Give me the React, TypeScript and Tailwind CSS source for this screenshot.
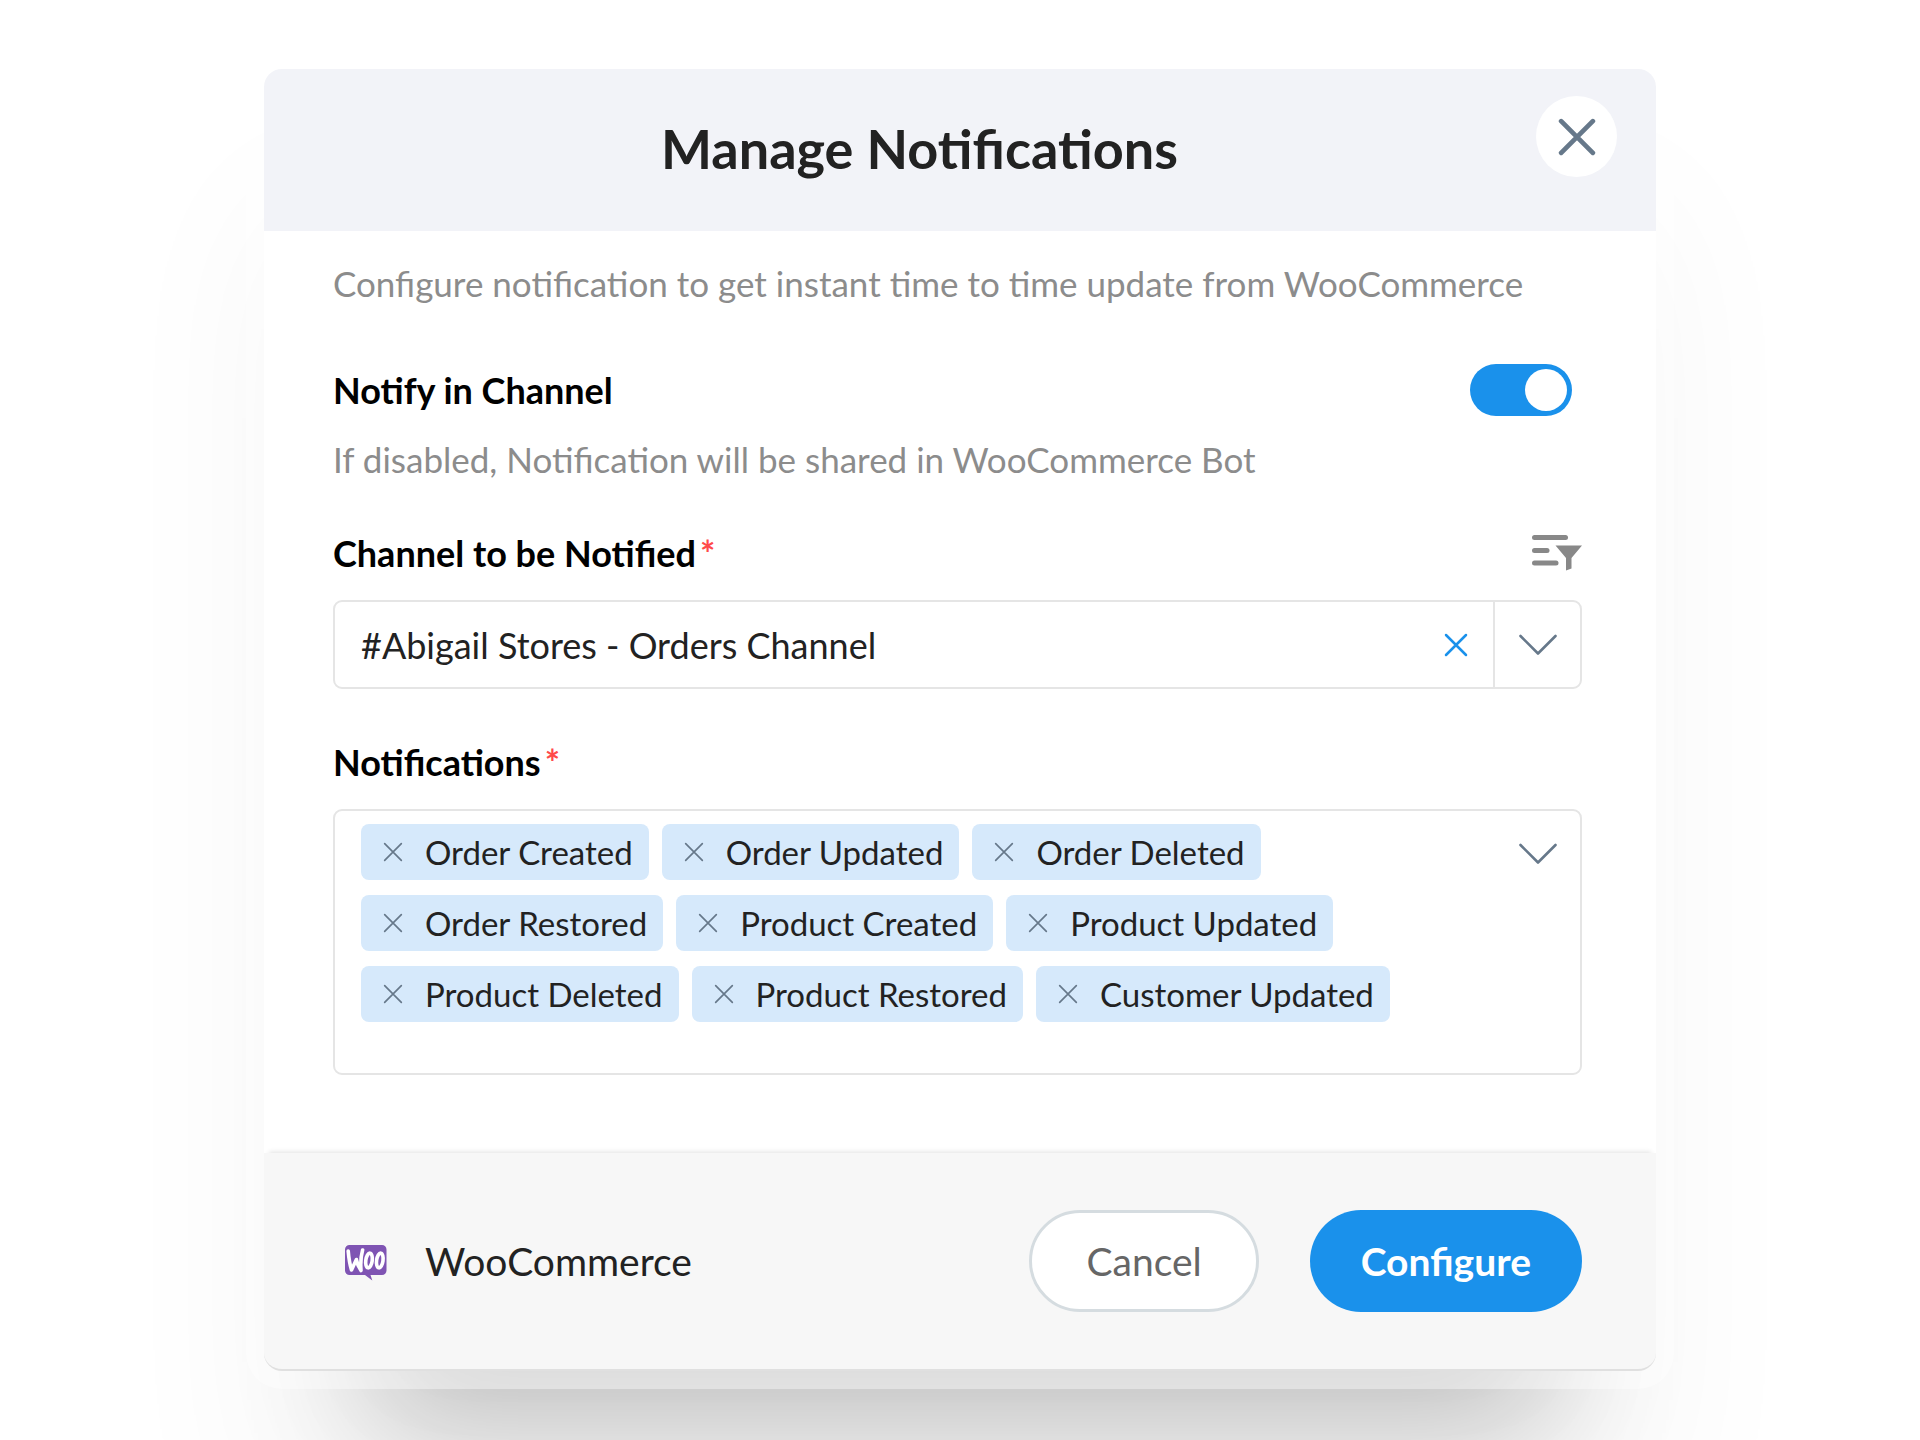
import { useState } from "react";

const channels = ["#Abigail Stores - Orders Channel"];

const initialEvents = [
  "Order Created",
  "Order Updated",
  "Order Deleted",
  "Order Restored",
  "Product Created",
  "Product Updated",
  "Product Deleted",
  "Product Restored",
  "Customer Updated",
];

function CrossIcon({ className, width }: { className: string; width: number }) {
  return (
    <svg viewBox="0 0 24 24" className={className} fill="none" stroke="currentColor" strokeWidth={width} strokeLinecap="round" aria-hidden="true">
      <path d="M2 2 22 22M22 2 2 22" />
    </svg>
  );
}

function ChevronIcon() {
  return (
    <svg viewBox="0 0 38 22" className="h-[22px] w-[38px]" fill="none" stroke="#66788a" strokeWidth="2.6" strokeLinecap="round" strokeLinejoin="round" aria-hidden="true">
      <path d="M1.500 2 19 19.500 36.500 2" />
    </svg>
  );
}

function FilterIcon() {
  return (
    <svg viewBox="0 0 50 36" className="h-[36px] w-[50px]" fill="#888888" aria-hidden="true">
      <rect x="0" y="0" width="36" height="5" rx="2.5" />
      <rect x="0" y="13" width="17.500" height="5" rx="2.5" />
      <rect x="0" y="25.500" width="26.500" height="5" rx="2.5" />
      <path d="M23.500 10.500H50L39.500 23V33.500L34 35.500V23Z" />
    </svg>
  );
}

function WooLogo() {
  return (
    <svg viewBox="0 -4 42 40" className="h-10 w-[42px]" role="img" aria-label="Woo">
      <path fill="#7f54b3" d="M4.500 0H37a4.500 4.500 0 0 1 4.500 4.500V25.500a4.500 4.500 0 0 1-4.500 4.500H25.500l1.800 5.600L20 30H4.500A4.500 4.500 0 0 1 0 25.500V4.500A4.500 4.500 0 0 1 4.500 0Z" />
      <g fill="none" stroke="#ffffff" strokeLinecap="round" strokeLinejoin="round">
        <path strokeWidth="3.600" d="M3.200 6C3.800 13 4.700 19 6.500 25L11.400 14.500C12 18.500 13.600 22 16 25.500C15.400 18 15.800 11.500 17.600 5" />
        <ellipse strokeWidth="3.600" cx="24" cy="15.500" rx="3.200" ry="7.400" transform="rotate(8 24 15.500)" />
        <ellipse strokeWidth="3.600" cx="34.800" cy="15.500" rx="3.200" ry="7.400" transform="rotate(8 34.800 15.500)" />
      </g>
    </svg>
  );
}

function Required() {
  return <span className="ml-1 text-[#ff4a4a]">*</span>;
}

export default function App() {
  const [enabled, setEnabled] = useState(true);
  const [events, setEvents] = useState(initialEvents);

  return (
    <main className="flex min-h-screen items-start justify-center overflow-hidden bg-white px-6 py-[69px] font-['Lato',sans-serif] text-[36px] leading-[48px] text-[#222222]">
      <section
        aria-labelledby="dialog-title"
        className="w-full max-w-[1392px] rounded-[18px] bg-white shadow-[0_0_0_18px_rgba(255,255,255,0.4),0_170px_120px_-108px_rgba(0,0,0,0.21),0_140px_170px_0_rgba(0,0,0,0.045)]"
      >
        <header className="flex items-start rounded-t-[18px] bg-[#f2f3f8] px-[39px] pt-[27px] pb-[50px]">
          <h1 id="dialog-title" className="flex-1 pt-[21px] text-center text-[54px] leading-[64px] font-bold">
            Manage Notifications
          </h1>
          <button type="button" aria-label="Close" className="flex size-[81px] items-center justify-center rounded-full bg-white text-[#66788a]">
            <CrossIcon className="size-[38px]" width={3} />
          </button>
        </header>

        <div className="pt-7 pr-[74px] pb-[78px] pl-[69px]">
          <p className="text-[35px] text-[#8c8c8c]">Configure notification to get instant time to time update from WooCommerce</p>

          <div className="mt-[59px] flex items-center justify-between">
            <label htmlFor="notify" className="font-bold text-black">
              Notify in Channel
            </label>
            <input
              id="notify"
              type="checkbox"
              role="switch"
              checked={enabled}
              onChange={(e) => setEnabled(e.target.checked)}
              className="-my-1 mr-[10px] h-[52px] w-[102px] cursor-pointer appearance-none rounded-full bg-gray-300 p-[5px] before:block before:size-[42px] before:rounded-full before:bg-white checked:bg-[#1a91eb] checked:before:ml-auto"
            />
          </div>
          <p className="mt-[21px] text-[35px] text-[#8c8c8c]">If disabled, Notification will be shared in WooCommerce Bot</p>

          <div className="mt-[46px] flex items-center justify-between">
            <label htmlFor="channel" className="font-bold text-black">
              Channel to be Notified
              <Required />
            </label>
            <button type="button" aria-label="Filter channels">
              <FilterIcon />
            </button>
          </div>
          <div className="mt-[23px] flex h-[89px] items-stretch rounded-[9px] border-2 border-[#e5e5e5]">
            <select id="channel" className="min-w-0 flex-1 appearance-none bg-transparent pl-[26px] outline-none">
              {channels.map((c) => (
                <option key={c}>{c}</option>
              ))}
            </select>
            <button type="button" aria-label="Clear channel" className="px-[25px] text-[#1a91eb]">
              <CrossIcon className="size-6" width={2.5} />
            </button>
            <button type="button" aria-label="Open channel list" className="flex w-[87px] items-center justify-center border-l-2 border-[#e5e5e5]">
              <ChevronIcon />
            </button>
          </div>

          <p id="events-label" className="mt-[49px] font-bold text-black">
            Notifications
            <Required />
          </p>
          <div className="mt-[23px] flex items-start rounded-[9px] border-2 border-[#e5e5e5] pt-[13px] pb-[51px] pl-[26px]">
            <ul aria-labelledby="events-label" className="flex max-w-[1060px] flex-1 flex-wrap gap-x-[13px] gap-y-[15px] text-[33px]">
              {events.map((event) => (
                <li key={event} className="flex h-14 items-center rounded-lg bg-[#d6e9fb] pr-4">
                  <button
                    type="button"
                    aria-label={"Remove " + event}
                    onClick={() => setEvents(events.filter((e) => e !== event))}
                    className="px-[22px] text-[#66788a]"
                  >
                    <CrossIcon className="size-5" width={2} />
                  </button>
                  {event}
                </li>
              ))}
            </ul>
            <button type="button" aria-label="Open notification list" className="ml-auto flex h-[60px] w-[85px] items-center justify-center">
              <ChevronIcon />
            </button>
          </div>
        </div>

        <footer className="flex items-center rounded-b-[18px] border-b-2 border-[#e0e0e0] bg-[#f7f7f7] pt-[57px] pr-[74px] pb-[57px] pl-[81px] text-[39px] shadow-[0_-6px_5px_-5px_rgba(0,0,0,0.12)]">
          <WooLogo />
          <span className="ml-[38px]">WooCommerce</span>
          <button type="button" className="ml-auto h-[102px] rounded-full border-[3px] border-[#d5dce0] bg-white px-[54px] text-[#666666]">
            Cancel
          </button>
          <button type="button" className="ml-[51px] h-[102px] rounded-full bg-[#1a91eb] px-[51px] font-bold text-white">
            Configure
          </button>
        </footer>
      </section>
    </main>
  );
}
